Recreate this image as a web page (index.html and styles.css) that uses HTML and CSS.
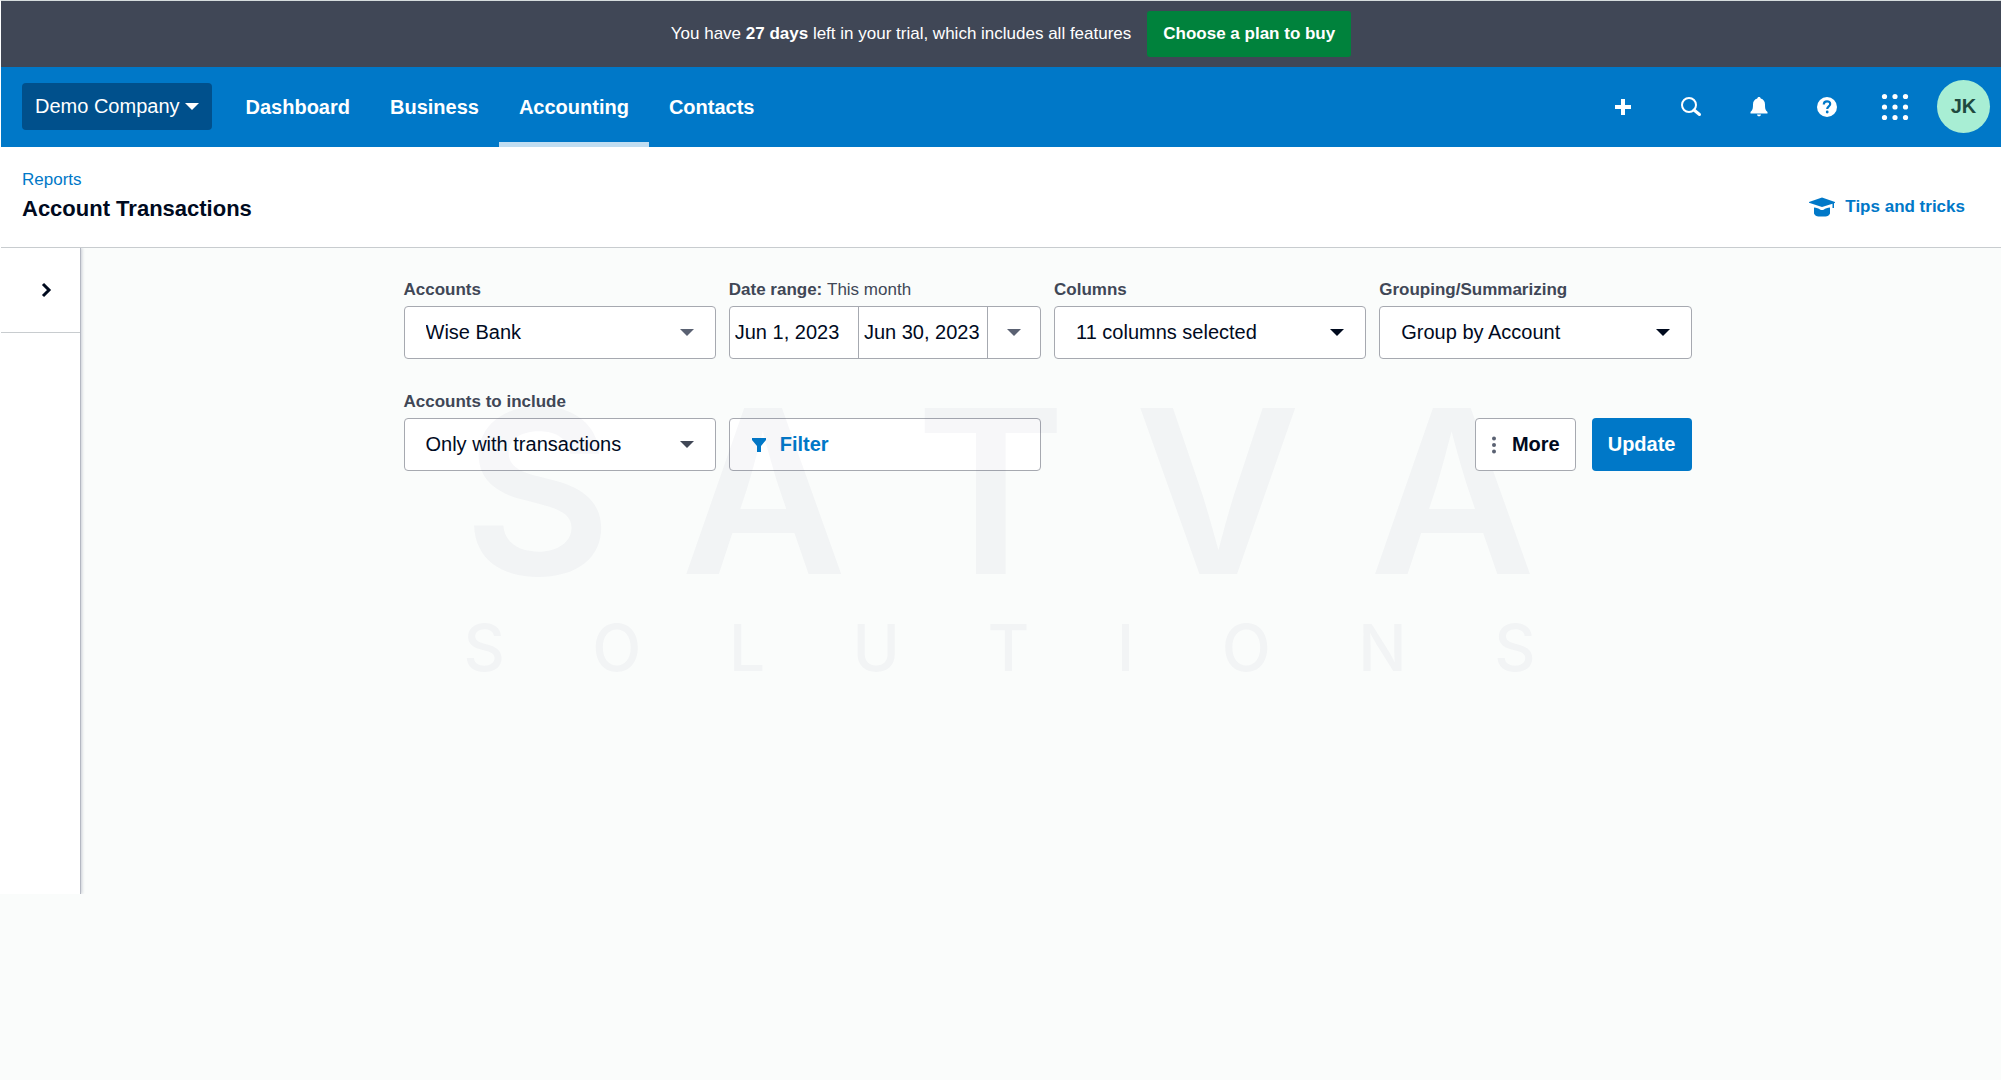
FILE: index.html
```html
<!DOCTYPE html>
<html lang="en">
<head>
<meta charset="utf-8">
<meta name="viewport" content="width=device-width, initial-scale=1">
<title>Account Transactions</title>
<link rel="stylesheet" href="styles.css">
</head>
<body>
<div class="trial">
  <p class="trial-text">You have <strong>27 days</strong> left in your trial, which includes all features</p>
  <button class="trial-button" type="button">Choose a plan to buy</button>
</div>

<header class="topbar">
  <button class="company" type="button">Demo Company <span class="caret"></span></button>
  <nav class="nav">
    <a class="nav-link" href="#">Dashboard</a>
    <a class="nav-link" href="#">Business</a>
    <a class="nav-link nav-link-active" href="#" aria-current="page">Accounting</a>
    <a class="nav-link" href="#">Contacts</a>
  </nav>
  <div class="tools">
    <button class="tool" type="button" aria-label="Create new">
      <svg width="28" height="28" viewBox="0 0 28 28"><path d="M14 6v16M6 14h16" stroke="#fff" stroke-width="4" fill="none"/></svg>
    </button>
    <button class="tool" type="button" aria-label="Search">
      <svg width="28" height="28" viewBox="0 0 28 28"><circle cx="12" cy="12" r="7" stroke="#fff" stroke-width="2" fill="none"/><path d="M17 17l5.500 4.500" stroke="#fff" stroke-width="3" stroke-linecap="round"/></svg>
    </button>
    <button class="tool" type="button" aria-label="Notifications">
      <svg width="28" height="28" viewBox="0 0 28 28"><path d="M14 4c1 0 1.700.7 1.700 1.600C18.500 6.400 20 8.600 20 11.500c0 4.500.6 5.700 2.500 7.500v1.500h-17V19C7.400 17.200 8 16 8 11.500c0-2.900 1.500-5.100 4.300-5.900C12.300 4.700 13 4 14 4zM12 21.500h4c0 1-1 1.800-2 1.800s-2-.8-2-1.800z" fill="#fff"/></svg>
    </button>
    <button class="tool" type="button" aria-label="Help">
      <svg width="28" height="28" viewBox="0 0 28 28"><circle cx="14" cy="14" r="10" fill="#fff"/><path d="M10.800 11.400c0-4 6.400-4 6.400-.4 0 2.300-3 2.300-3 4.900" stroke="#0078c8" stroke-width="2.200" fill="none"/><circle cx="14.200" cy="19" r="1.400" fill="#0078c8"/></svg>
    </button>
    <button class="tool" type="button" aria-label="Apps">
      <svg width="28" height="28" viewBox="0 0 28 28" fill="#fff"><circle cx="3.500" cy="3.500" r="2.600"/><circle cx="14" cy="3.500" r="2.600"/><circle cx="24.500" cy="3.500" r="2.600"/><circle cx="3.500" cy="14" r="2.600"/><circle cx="14" cy="14" r="2.600"/><circle cx="24.500" cy="14" r="2.600"/><circle cx="3.500" cy="24.500" r="2.600"/><circle cx="14" cy="24.500" r="2.600"/><circle cx="24.500" cy="24.500" r="2.600"/></svg>
    </button>
    <button class="avatar" type="button">JK</button>
  </div>
</header>

<div class="page-head">
  <div class="page-titles">
    <a class="crumb" href="#">Reports</a>
    <h1 class="title">Account Transactions</h1>
  </div>
  <a class="tips" href="#">
    <svg width="26" height="20" viewBox="0 0 26 20" fill="#0078c8"><path d="M13 .5L26 5v.8l-1 .4V11h-1.500V6.700L13 10 0 5.800V5z"/><path d="M5 10.500c2.500.2 4.800 1 6 1.900 1 .8 3 .8 4 0 1.200-.9 3.500-1.700 6-1.900v6c-.8 2-2.500 3-4.500 3h-7c-2 0-3.700-1-4.500-3z"/></svg>
    Tips and tricks
  </a>
</div>

<div class="layout">
  <aside class="sidebar">
    <button class="expand" type="button" aria-label="Expand sidebar">
      <svg width="12" height="16" viewBox="0 0 12 16"><path d="M3 2l6 6-6 6" stroke="#000a1e" stroke-width="3" fill="none"/></svg>
    </button>
  </aside>

  <main class="main">
    <form class="filters">
      <div class="field">
        <label class="label" for="accounts">Accounts</label>
        <div class="select select-soft">
          <select id="accounts"><option>Wise Bank</option></select>
        </div>
      </div>
      <div class="field">
        <label class="label" for="date-from">Date range: <span class="label-value">This month</span></label>
        <div class="dates">
          <input class="date" id="date-from" type="text" value="Jun 1, 2023">
          <input class="date" type="text" value="Jun 30, 2023" aria-label="End date">
          <button class="date-menu" type="button" aria-label="Choose date range"><span class="caret"></span></button>
        </div>
      </div>
      <div class="field">
        <label class="label" for="columns">Columns</label>
        <div class="select">
          <select id="columns"><option>11 columns selected</option></select>
        </div>
      </div>
      <div class="field">
        <label class="label" for="grouping">Grouping/Summarizing</label>
        <div class="select">
          <select id="grouping"><option>Group by Account</option></select>
        </div>
      </div>
      <div class="field">
        <label class="label" for="include">Accounts to include</label>
        <div class="select select-medium">
          <select id="include"><option>Only with transactions</option></select>
        </div>
      </div>
      <div class="field field-end">
        <button class="filter" type="button">
          <svg width="14" height="14" viewBox="0 0 14 14" fill="#0078c8"><path d="M0 0h14v2L9 8v6H5V8L0 2z"/></svg>
          Filter
        </button>
      </div>
      <div class="actions">
        <button class="more" type="button">
          <svg width="6" height="18" viewBox="0 0 6 18" fill="#5a6172"><circle cx="3" cy="2.500" r="2"/><circle cx="3" cy="9" r="2"/><circle cx="3" cy="15.500" r="2"/></svg>
          More
        </button>
        <button class="update" type="submit">Update</button>
      </div>
      <div class="watermark" aria-hidden="true">
        <div class="mark-name"><span>S</span><span>A</span><span>T</span><span>V</span><span>A</span></div>
        <div class="mark-sub"><span>S</span><span>O</span><span>L</span><span>U</span><span>T</span><span>I</span><span>O</span><span>N</span><span>S</span></div>
      </div>
    </form>
  </main>
</div>
</body>
</html>
```
FILE: styles.css
```css
* {
  box-sizing: border-box;
}

body {
  margin: 0;
  border-top: 1px solid #d6dcdd;
  border-left: 1px solid #fff;
  background: #fafcfb;
  color: #000a1e;
  font-family: "Liberation Sans", Arial, sans-serif;
  font-size: 20px;
}

button,
input,
select {
  margin: 0;
  font: inherit;
  color: inherit;
}

a {
  text-decoration: none;
}

svg {
  display: block;
  flex: none;
}

.caret {
  border: 7px solid transparent;
  border-top-color: currentColor;
  border-bottom: 0;
}

/* Trial banner */
.trial {
  display: flex;
  align-items: center;
  justify-content: center;
  gap: 16px;
  padding: 10px 0;
  padding-left: 20px;
  background: #404756;
  color: #fff;
  font-size: 17px;
}

.trial-text {
  margin: 0;
}

.trial-button {
  height: 46px;
  padding: 0 16px;
  border: 0;
  border-radius: 3px;
  background: #00823c;
  font-weight: bold;
}

/* Top bar */
.topbar {
  display: flex;
  align-items: center;
  height: 80px;
  padding: 0 11px 1px 21px;
  background: #0078c8;
  color: #fff;
}

.company {
  display: flex;
  align-items: center;
  gap: 5px;
  height: 47px;
  padding: 0 13px;
  border: 0;
  border-radius: 4px;
  background: #00508c;
}

.nav {
  display: flex;
  align-self: stretch;
  margin: 0 0 -1px 14px;
}

.nav-link {
  display: flex;
  align-items: center;
  padding: 5px 20px 0;
  border-bottom: 5px solid transparent;
  color: #fff;
  font-weight: bold;
}

.nav-link-active {
  border-color: #c0ddf1;
}

.tools {
  display: flex;
  align-items: center;
  margin-left: auto;
}

.tool {
  display: flex;
  align-items: center;
  justify-content: center;
  width: 68px;
  height: 68px;
  padding: 0;
  border: 0;
  background: none;
}

.avatar {
  width: 53px;
  height: 53px;
  margin-left: 8px;
  padding: 0;
  border: 0;
  border-radius: 50%;
  background: #a8eed4;
  color: #1f4a3f;
  font-weight: bold;
}

/* Page heading */
.page-head {
  display: flex;
  align-items: center;
  justify-content: space-between;
  height: 101px;
  padding: 0 36px 0 21px;
  border-bottom: 1px solid #c8cccf;
  background: #fff;
}

.crumb {
  display: block;
  color: #0078c8;
  font-size: 17px;
  line-height: 24px;
}

.title {
  margin: 0;
  font-size: 22px;
  line-height: 34px;
}

.tips {
  display: flex;
  align-items: center;
  gap: 10px;
  padding-top: 20px;
  color: #0078c8;
  font-size: 17px;
  font-weight: bold;
}

/* Body */
.layout {
  display: flex;
  align-items: flex-start;
}

.sidebar {
  width: 80px;
  min-height: 646px;
  border-right: 1px solid #b4b8c2;
  box-shadow: 1px 0 3px #c8ccd4;
  background: #fff;
  clip-path: inset(0 -4px 0 0);
}

.expand {
  display: flex;
  align-items: center;
  justify-content: center;
  width: 100%;
  height: 85px;
  padding: 0 0 0 10px;
  border: 0;
  border-bottom: 1px solid #c8cccf;
  background: none;
}

.main {
  flex: 1;
  padding: 32px 0 0 13px;
}

.filters {
  position: relative;
  display: grid;
  grid-template-columns: repeat(4, 1fr);
  gap: 33px 13px;
  max-width: 1288px;
  margin: 0 auto;
}

.field {
  display: flex;
  flex-direction: column;
  gap: 6px;
}

.field-end {
  justify-content: flex-end;
}

.label {
  color: #404756;
  font-size: 17px;
  font-weight: bold;
  line-height: 20px;
}

.label-value {
  font-weight: normal;
}

.select,
.dates,
.filter,
.more {
  height: 53px;
  border: 1px solid #a6a9b0;
  border-radius: 4px;
  background: #fff;
}

.select {
  display: grid;
  grid-template-columns: 1fr 56px;
  align-items: center;
}

.select::after {
  grid-area: 1 / 2;
  justify-self: center;
  border: 7px solid transparent;
  border-top-color: currentColor;
  border-bottom: 0;
  pointer-events: none;
  content: "";
}

.select-soft::after,
.date-menu {
  color: #5a6172;
}

.select-medium::after {
  color: #404756;
}

.select select {
  grid-area: 1 / 1 / 2 / 3;
  height: 100%;
  padding: 0 0 2px 21px;
  border: 0;
  background: none;
  appearance: none;
}

.dates {
  display: grid;
  grid-template-columns: 1fr 1fr 52px;
}

.date {
  min-width: 0;
  padding: 0 0 0 5px;
  border: 0;
  border-right: 1px solid #a6a9b0;
  background: none;
}

.date-menu {
  display: flex;
  align-items: center;
  justify-content: center;
  padding: 0;
  border: 0;
  background: none;
}

.filter {
  display: flex;
  align-items: center;
  gap: 14px;
  padding: 0 22px;
  color: #0078c8;
  font-weight: bold;
}

.actions {
  z-index: 2;
  display: flex;
  grid-column: 3 / 5;
  align-items: flex-end;
  justify-content: flex-end;
  gap: 16px;
}

.more,
.update {
  font-weight: bold;
}

.more {
  display: flex;
  align-items: center;
  gap: 15px;
  padding: 0 15px;
}

.update {
  height: 53px;
  padding: 0 16px;
  border: 0;
  border-radius: 4px;
  background: #0078c8;
  color: #fff;
}

/* Brand mark laid over the form */
.watermark {
  position: absolute;
  top: 128px;
  right: 156px;
  left: 60px;
  z-index: 1;
  color: rgba(60, 60, 110, 0.04);
  font-family: Inter, sans-serif;
  font-weight: 500;
  pointer-events: none;
}

.mark-name,
.mark-sub {
  display: flex;
  justify-content: space-between;
}

.mark-name {
  font-size: 228px;
  font-weight: 600;
  line-height: 166px;
}

.mark-sub {
  margin-top: 50px;
  font-size: 64px;
  line-height: 48px;
}
```
